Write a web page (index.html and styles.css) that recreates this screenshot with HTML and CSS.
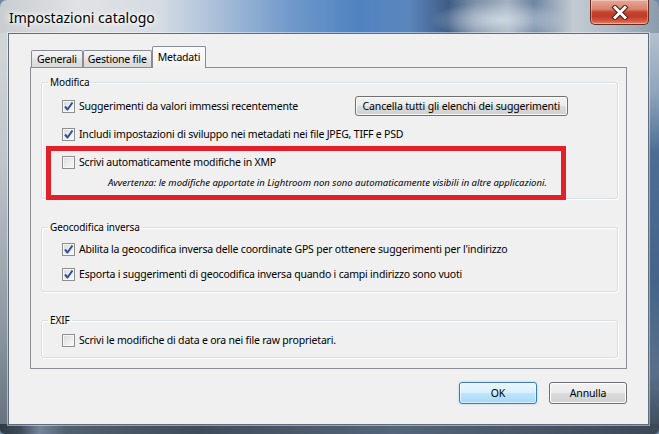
FILE: index.html
```html
<!DOCTYPE html>
<html lang="it">
<head>
<meta charset="utf-8">
<title>Impostazioni catalogo</title>
<link rel="stylesheet" href="styles.css">
</head>
<body>
<div class="window">
  <div class="titlebar">
    <span class="title">Impostazioni catalogo</span>
    <button class="close" aria-label="Chiudi">
      <svg width="18" height="15" viewBox="0 0 18 15">
        <path d="M4 2.5 L14 12.5 M14 2.5 L4 12.5" stroke="#4a2520" stroke-width="5" stroke-linecap="square" fill="none"/>
        <path d="M4 2.5 L14 12.5 M14 2.5 L4 12.5" stroke="#ffffff" stroke-width="2.8" stroke-linecap="square" fill="none"/>
      </svg>
    </button>
  </div>
  <div class="client">
    <div class="tabs">
      <div class="tab">Generali</div>
      <div class="tab">Gestione file</div>
      <div class="tab active">Metadati</div>
    </div>
    <div class="panel">
      <fieldset class="group modifica">
        <legend>Modifica</legend>
        <div class="row">
          <label class="check"><span class="box on"><svg width="11" height="11" viewBox="0 0 11 11"><path d="M2 5.5 L4.5 8.5 L9.5 1.5" stroke="#2e4f9e" stroke-width="2" fill="none" stroke-linejoin="round"/></svg></span>Suggerimenti da valori immessi recentemente</label>
          <button class="btn suggest">Cancella tutti gli elenchi dei suggerimenti</button>
        </div>
        <div class="row">
          <label class="check"><span class="box on"><svg width="11" height="11" viewBox="0 0 11 11"><path d="M2 5.5 L4.5 8.5 L9.5 1.5" stroke="#2e4f9e" stroke-width="2" fill="none" stroke-linejoin="round"/></svg></span>Includi impostazioni di sviluppo nei metadati nei file JPEG, TIFF e PSD</label>
        </div>
        <div class="flagged">
          <div class="row">
            <label class="check"><span class="box"></span>Scrivi automaticamente modifiche in XMP</label>
          </div>
          <div class="note">Avvertenza: le modifiche apportate in Lightroom non sono automaticamente visibili in altre applicazioni.</div>
        </div>
      </fieldset>
      <fieldset class="group geo">
        <legend>Geocodifica inversa</legend>
        <div class="row">
          <label class="check"><span class="box on"><svg width="11" height="11" viewBox="0 0 11 11"><path d="M2 5.5 L4.5 8.5 L9.5 1.5" stroke="#2e4f9e" stroke-width="2" fill="none" stroke-linejoin="round"/></svg></span>Abilita la geocodifica inversa delle coordinate GPS per ottenere suggerimenti per l'indirizzo</label>
        </div>
        <div class="row">
          <label class="check"><span class="box on"><svg width="11" height="11" viewBox="0 0 11 11"><path d="M2 5.5 L4.5 8.5 L9.5 1.5" stroke="#2e4f9e" stroke-width="2" fill="none" stroke-linejoin="round"/></svg></span>Esporta i suggerimenti di geocodifica inversa quando i campi indirizzo sono vuoti</label>
        </div>
      </fieldset>
      <fieldset class="group exif">
        <legend>EXIF</legend>
        <div class="row">
          <label class="check"><span class="box"></span>Scrivi le modifiche di data e ora nei file raw proprietari.</label>
        </div>
      </fieldset>
    </div>
    <div class="actions">
      <button class="btn action default">OK</button>
      <button class="btn action">Annulla</button>
    </div>
  </div>
</div>
</body>
</html>
```

FILE: styles.css
```css
* { box-sizing: border-box; }
html, body { margin: 0; padding: 0; }
body {
  width: 659px;
  height: 434px;
  overflow: hidden;
  background: #6f8aa8;
  font-family: "Noto Sans", "Open Sans", sans-serif;
  font-size: 10.5px;
  letter-spacing: -0.2px;
  color: #000;
}

.window {
  width: 659px;
  height: 434px;
  display: flex;
  flex-direction: column;
  border-radius: 7px 7px 5px 5px;
  overflow: hidden;
  background:
    linear-gradient(to right, #2f3a47 0, #3e4a58 3%, #74849a 6%, #52616f 10%, #3f4c5a 30%, #55657a 60%, #3c4856 100%) left bottom / 100% 10px no-repeat,
    linear-gradient(to bottom, #d3d6d9 0, #bfc4ca 30%, #8a949e 70%, #56626f 100%) left 33px / 8px 100% no-repeat,
    linear-gradient(to bottom, #b5c1cd 0, #8ea4bc 60px, #4d6d95 120px, #46648a 250px, #5a7089 340px, #3d4a59 400px) right 33px / 11px 100% no-repeat,
    radial-gradient(ellipse 70px 18px at 500px 20px, rgba(220, 228, 236, 0.75), rgba(220, 228, 236, 0) 100%) 0 0 / 100% 33px no-repeat,
    linear-gradient(to right, #c9cdd1 0, #e0e2e5 12%, #d6dce3 24%, #a8bfd9 33%, #7199ca 44%, #5083c2 54%, #5b86bd 62%, #3f5d85 68%, #7d90a8 72%, #a4b1c1 77%, #6f86a2 81%, #c3cbd3 87%, #aab6c3 94%, #8c9cad 100%);
}

.titlebar {
  height: 33px;
  display: flex;
  align-items: flex-start;
  flex: none;
}
.title {
  padding: 8px 0 0 9px;
  font-size: 14px;
  letter-spacing: 0;
  line-height: 20px;
  color: #000;
  text-shadow: 0 0 6px #fff, 0 0 10px #fff, 0 0 3px #fff;
}
.close {
  margin-left: auto;
  margin-right: 10px;
  width: 59px;
  height: 25px;
  padding: 0;
  display: flex;
  align-items: center;
  justify-content: center;
  border: 1px solid #6b2a1f;
  border-top: 0;
  border-radius: 0 0 5px 5px;
  background: linear-gradient(to bottom, #e8a795 0, #d9846f 38%, #c5452d 50%, #bf3a2a 68%, #d35a40 88%, #e48a6c 100%);
  box-shadow: inset 0 0 0 1px rgba(255, 255, 255, 0.35);
}

.client {
  flex: 1;
  margin: 0 10px 9px 8px;
  background: #f0f0f0;
  border: 1px solid #5f6c7a;
  box-shadow: 0 0 0 1px rgba(255, 255, 255, 0.45);
  padding: 12px 21px 0 21px;
  display: flex;
  flex-direction: column;
}

.tabs {
  display: flex;
  align-items: flex-end;
  height: 21px;
  padding-left: 1px;
}
.tab {
  height: 17px;
  padding: 0 5px;
  border: 1px solid #898c95;
  border-bottom: 0;
  border-radius: 2px 2px 0 0;
  background: linear-gradient(to bottom, #f4f4f4 0, #ebebeb 45%, #e1e1e1 55%, #d9d9d9 100%);
  line-height: 16px;
  white-space: nowrap;
}
.tab + .tab { padding: 0 4px; }
.tab.active {
  height: 22px;
  margin-bottom: -1px;
  position: relative;
  z-index: 1;
  background: linear-gradient(to bottom, #fcfcfc 0, #f6f6f6 60%, #f0f0f0 100%);
  line-height: 20px;
  padding: 0 5px;
}

.panel {
  border: 1px solid #898c95;
  background: #f0f0f0;
  padding: 7px 8px 10px 10px;
  display: flex;
  flex-direction: column;
  gap: 21px;
}

.group {
  margin: 0;
  min-width: 0;
  border: 1px solid #d5dfe5;
  border-radius: 3px;
  box-shadow: inset 1px 1px 0 #fff, 1px 1px 0 #fff;
  padding: 0 0 7px 6px;
}
.group legend {
  padding: 0 2px;
  font-size: 10px;
  letter-spacing: -0.1px;
  line-height: 14px;
}
.modifica { padding-top: 7px; padding-bottom: 8px; }
.geo { padding-top: 5px; }
.exif { padding-top: 3px; }

.row {
  display: flex;
  align-items: center;
  height: 20px;
  padding-left: 14px;
}
.row + .row, .row + .flagged { margin-top: 8px; }
.geo .row + .row { margin-top: 5px; }

.check {
  display: flex;
  align-items: center;
  white-space: nowrap;
}
.box {
  flex: none;
  width: 13px;
  height: 13px;
  margin-right: 4px;
  border: 1px solid #8e8f8f;
  background: linear-gradient(135deg, #d9d9d9 0, #ececec 55%, #fafafa 100%);
  box-shadow: inset 0 0 0 1px #f6f6f6;
  display: flex;
  align-items: center;
  justify-content: center;
}

.flagged {
  position: relative;
}
.flagged::after {
  content: "";
  position: absolute;
  top: -6px;
  left: -2px;
  right: 51px;
  bottom: -10px;
  border: 5px solid #e2202a;
  pointer-events: none;
}
.note {
  margin-top: 4px;
  height: 14px;
  padding-left: 60px;
  font-size: 9.5px;
  letter-spacing: 0;
  font-style: italic;
  line-height: 14px;
  white-space: nowrap;
}

.btn {
  font-family: inherit;
  font-size: 10.5px;
  letter-spacing: -0.15px;
  color: #000;
  border: 1px solid #707070;
  border-radius: 3px;
  background: linear-gradient(to bottom, #f2f2f2 0, #ebebeb 50%, #dddddd 50%, #cfcfcf 100%);
  box-shadow: inset 0 0 0 1px #fcfcfc;
  padding: 0 7px;
  white-space: nowrap;
}
.suggest {
  height: 20px;
  margin-left: auto;
  margin-right: 49px;
}

.actions {
  display: flex;
  justify-content: flex-end;
  gap: 12px;
  margin-top: 13px;
}
.action {
  width: 78px;
  height: 22px;
}
.default {
  border-color: #3c7fb1;
  background: linear-gradient(to bottom, #eaf6fd 0, #d9f0fc 50%, #bee6fd 50%, #a7d9f5 100%);
  box-shadow: inset 0 0 0 1px rgba(255, 255, 255, 0.55), 0 0 2px rgba(60, 160, 220, 0.5);
}
```
